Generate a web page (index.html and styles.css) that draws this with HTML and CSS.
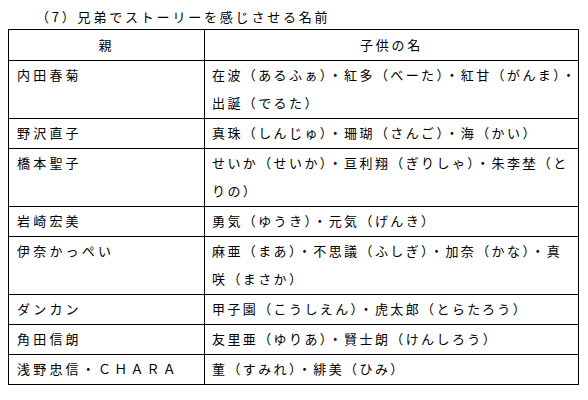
FILE: index.html
```html
<!DOCTYPE html>
<html lang="ja">
<head>
<meta charset="utf-8">
<title>兄弟でストーリーを感じさせる名前</title>
<link rel="stylesheet" href="styles.css">
</head>
<body>
<div class="title">（7）兄弟でストーリーを感じさせる名前</div>
<table class="names">
  <colgroup>
    <col class="col-parent">
    <col class="col-child">
  </colgroup>
  <thead>
    <tr><th class="h-parent">親</th><th class="h-child">子供の名</th></tr>
  </thead>
  <tbody>
    <tr><td class="parent">内田春菊</td><td class="child">在波（あるふぁ）・紅多（べーた）・紅甘（がんま）・<br>出誕（でるた）</td></tr>
    <tr><td class="parent">野沢直子</td><td class="child">真珠（しんじゅ）・珊瑚（さんご）・海（かい）</td></tr>
    <tr><td class="parent">橋本聖子</td><td class="child">せいか（せいか）・亘利翔（ぎりしゃ）・朱李埜（と<br>りの）</td></tr>
    <tr><td class="parent">岩崎宏美</td><td class="child">勇気（ゆうき）・元気（げんき）</td></tr>
    <tr><td class="parent">伊奈かっぺい</td><td class="child">麻亜（まあ）・不思議（ふしぎ）・加奈（かな）・真<br>咲（まさか）</td></tr>
    <tr><td class="parent">ダンカン</td><td class="child">甲子園（こうしえん）・虎太郎（とらたろう）</td></tr>
    <tr><td class="parent">角田信朗</td><td class="child">友里亜（ゆりあ）・賢士朗（けんしろう）</td></tr>
    <tr><td class="parent">浅野忠信・ＣＨＡＲＡ</td><td class="child">菫（すみれ）・緋美（ひみ）</td></tr>
  </tbody>
</table>
</body>
</html>
```

FILE: styles.css
```css
html, body {
  margin: 0;
  padding: 0;
  background: #ffffff;
}

body {
  padding: 8px;
  font-family: "Noto Sans CJK JP", "Noto Sans", sans-serif;
  font-size: 13px;
  color: #000000;
}

.title {
  margin-left: 28px;
  height: 18px;
  line-height: 18px;
  margin-bottom: 3px;
  letter-spacing: 2.8px;
  white-space: nowrap;
}

.names {
  border-collapse: collapse;
  table-layout: fixed;
  width: 570px;
}

.col-parent { width: 196px; }
.col-child { width: 374px; }

.names th,
.names td {
  border: 1px solid #000000;
  font-weight: normal;
  white-space: nowrap;
  vertical-align: top;
  overflow: hidden;
}

.names th {
  text-align: center;
  line-height: 30px;
  padding: 0;
  letter-spacing: 2.8px;
}

.names td {
  text-align: left;
  line-height: 28px;
  padding: 0 0 1px 0;
}

.parent {
  padding-left: 8px !important;
  letter-spacing: 3.2px;
}

.child {
  padding-left: 7px !important;
  letter-spacing: 2.4px;
}
```
